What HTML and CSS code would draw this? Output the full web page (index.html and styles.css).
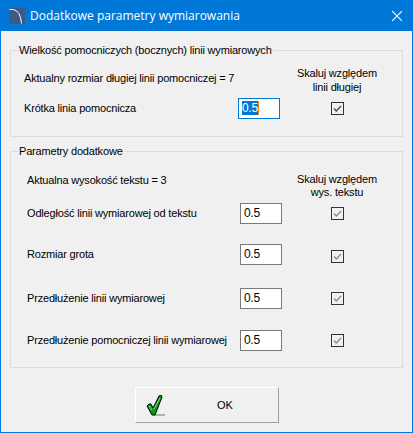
FILE: index.html
```html
<!DOCTYPE html>
<html lang="pl">
<head>
<meta charset="utf-8">
<title>Dodatkowe parametry wymiarowania</title>
<link rel="stylesheet" href="styles.css">
</head>
<body>
<div class="window">
  <header class="titlebar">
    <svg class="app-icon" width="16" height="16" viewBox="0 0 16 16"><rect width="16" height="16" fill="#3c5a88"/><path d="M0.5 1.5H4.5Q11.5 3 12.5 15.5" fill="none" stroke="#fff" stroke-width="1"/></svg>
    <span class="title">Dodatkowe parametry wymiarowania</span>
    <svg class="close" width="10" height="10" viewBox="0 0 10 10"><path d="M0 0L10 10M10 0L0 10" stroke="#fff" stroke-width="1.1"/></svg>
  </header>
  <main class="content">
    <fieldset class="group group-one">
      <legend>Wielkość pomocniczych (bocznych) linii wymiarowych</legend>
      <div class="row row-head-one">
        <span class="label head-label-one">Aktualny rozmiar długiej linii pomocniczej = 7</span>
        <span class="scale">Skaluj względem<br>linii długiej</span>
      </div>
      <div class="row row-short">
        <span class="label">Krótka linia pomocnicza</span>
        <span class="field focused"><span class="selected">0.5</span></span>
        <span class="check"><svg width="13" height="13" viewBox="0 0 13 13"><rect x="0.5" y="0.5" width="12" height="12" fill="#f0f0f0" stroke="#333"/><path d="M3 6.5L5.3 9L10 4" fill="none" stroke="#444" stroke-width="1.2"/></svg></span>
      </div>
    </fieldset>
    <fieldset class="group group-two">
      <legend>Parametry dodatkowe</legend>
      <div class="row row-head-two">
        <span class="label head-label-two">Aktualna wysokość tekstu = 3</span>
        <span class="scale">Skaluj względem<br>wys. tekstu</span>
      </div>
      <div class="row row-param row-first">
        <span class="label">Odległość linii wymiarowej od tekstu</span>
        <span class="field">0.5</span>
        <span class="check"><svg width="13" height="13" viewBox="0 0 13 13"><rect x="0.5" y="0.5" width="12" height="12" fill="#f0f0f0" stroke="#333"/><path d="M3 6.5L5.3 9L10 4" fill="none" stroke="#888" stroke-width="1.2"/></svg></span>
      </div>
      <div class="row row-param row-second">
        <span class="label">Rozmiar grota</span>
        <span class="field">0.5</span>
        <span class="check check-low"><svg width="13" height="13" viewBox="0 0 13 13"><rect x="0.5" y="0.5" width="12" height="12" fill="#f0f0f0" stroke="#333"/><path d="M3 6.5L5.3 9L10 4" fill="none" stroke="#888" stroke-width="1.2"/></svg></span>
      </div>
      <div class="row row-param row-third">
        <span class="label">Przedłużenie linii wymiarowej</span>
        <span class="field">0.5</span>
        <span class="check"><svg width="13" height="13" viewBox="0 0 13 13"><rect x="0.5" y="0.5" width="12" height="12" fill="#f0f0f0" stroke="#333"/><path d="M3 6.5L5.3 9L10 4" fill="none" stroke="#888" stroke-width="1.2"/></svg></span>
      </div>
      <div class="row row-param row-fourth">
        <span class="label">Przedłużenie pomocniczej linii wymiarowej</span>
        <span class="field">0.5</span>
        <span class="check"><svg width="13" height="13" viewBox="0 0 13 13"><rect x="0.5" y="0.5" width="12" height="12" fill="#f0f0f0" stroke="#333"/><path d="M3 6.5L5.3 9L10 4" fill="none" stroke="#888" stroke-width="1.2"/></svg></span>
      </div>
    </fieldset>
    <button class="ok" type="button">
      <svg class="ok-icon" width="20" height="21" viewBox="0 0 20 21"><path d="M8 20H19" stroke="#6fae6f" stroke-width="1.4"/><path d="M1 11L3 9L5 9L7 13L13 1L15 0L16 2L9 20H6Z" fill="#0c9a1c" stroke="#000" stroke-width="1"/><path d="M3 11L6 15M8 14L14 3" stroke="#7fe08a" stroke-width="1"/></svg>
      <span class="ok-text">OK</span>
    </button>
  </main>
</div>
</body>
</html>
```
FILE: styles.css
```css
* { box-sizing: border-box; }
html, body { margin: 0; padding: 0; }
body {
  width: 413px;
  height: 433px;
  overflow: hidden;
  font-family: "Liberation Sans", Arial, sans-serif;
  font-size: 11px;
  letter-spacing: -0.18px;
  color: #000;
}
.window {
  width: 413px;
  height: 433px;
  display: flex;
  flex-direction: column;
  border: 1px solid #0078d7;
  border-top: 0;
  background: #f0f0f0;
}
.titlebar {
  height: 31px;
  flex: none;
  margin: 0 -1px;
  padding: 0 11px 0 9px;
  display: flex;
  align-items: center;
  background: #0078d7;
  color: #fff;
}
.app-icon { flex: none; }
.title {
  margin-left: 5px;
  flex: 1;
  font-family: "Open Sans", "Liberation Sans", sans-serif;
  font-size: 12px;
  letter-spacing: 0;
}
.close { flex: none; }
.content {
  flex: 1;
  padding: 0 9px;
  display: flex;
  flex-direction: column;
}
.group {
  margin: 0;
  padding: 0;
  min-width: 0;
  border: 1px solid #dcdcdc;
}
.group legend {
  margin-left: 7px;
  padding: 0 1px;
  line-height: 13px;
  white-space: nowrap;
}
.group-one { margin-top: 13px; height: 93px; }
.group-two { margin-top: 8px; height: 223px; }
.row {
  display: grid;
  align-items: center;
  grid-template-columns: 213px 42px 49px 13px;
}
.group-one .row { grid-template-columns: 214px 42px 51px 13px; }
.label { white-space: nowrap; }
.scale {
  grid-column: 2 / -1;
  justify-self: end;
  width: 100px;
  margin-right: -43px;
  text-align: center;
  line-height: 14px;
}
.group-two .scale { line-height: 13px; }
.head-label-one { margin-bottom: 4px; }
.head-label-two { margin-bottom: 12px; }
.row-head-one { padding-left: 13px; margin-top: 9px; }
.row-short { padding-left: 13px; margin-top: 4px; }
.row-short .label { margin-bottom: 2px; }
.row-head-two { padding-left: 16px; margin-top: 15px; }
.row-param { padding-left: 16px; height: 21px; }
.row-param .label { margin-bottom: 2px; }
.row-first { margin-top: 4px; }
.row-second { margin-top: 20px; }
.row-third { margin-top: 23px; }
.row-fourth { margin-top: 21px; }
.field {
  height: 21px;
  border: 1px solid #7a7a7a;
  background: #fff;
  padding-left: 3px;
  line-height: 18px;
  font-size: 12px;
  letter-spacing: -0.3px;
}
.field.focused { border-color: #0078d7; }
.selected { background: #0078d7; color: #fff; border-right: 1px solid #ff8000; }
.check {
  grid-column: 4;
  width: 13px;
  height: 13px;
  display: block;
}
.check-low { margin-top: 4px; }
.check svg { display: block; }
.ok {
  margin: 19px 0 0 125px;
  width: 144px;
  height: 36px;
  padding: 0;
  display: flex;
  align-items: center;
  font: inherit;
  color: #000;
  background: #f0f0f0;
  border: 1px solid;
  border-color: #fff #a0a0a0 #a0a0a0 #fff;
}
.ok-icon { margin-left: 10px; flex: none; }
.ok-text { margin-left: 51px; }
```
